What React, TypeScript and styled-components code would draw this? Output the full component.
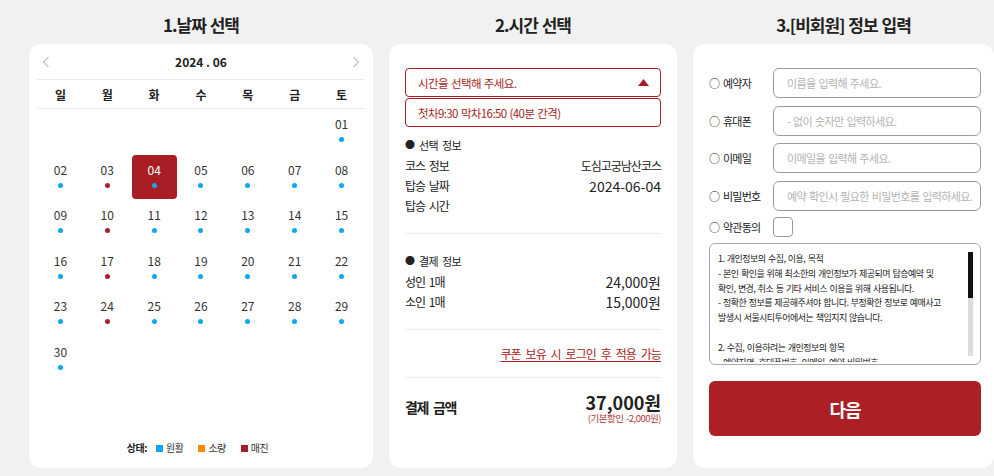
import React from 'react';
import styled, { createGlobalStyle } from 'styled-components';

const RED = '#a81e24';
const BLUE = '#0aa7f2';
const ORANGE = '#ff8a00';

const Global = createGlobalStyle`
  html, body { margin: 0; padding: 0; background: #f1f1f1; overflow: hidden; }
  body { font-family: "Noto Sans CJK KR", "Noto Sans", sans-serif; color: #222; word-spacing: 2px; }
  * { box-sizing: border-box; }
`;

const Page = styled.div`
  display: flex;
  gap: 16px;
  padding-left: 29px;
  width: 994px;
  height: 476px;
`;

const Column = styled.section<{ $w: number }>`
  width: ${p => p.$w}px;
  flex: none;
  display: flex;
  flex-direction: column;
`;

const Title = styled.h2`
  margin: 0;
  height: 44px;
  padding-top: 13px;
  font-size: 17px;
  line-height: 24px;
  font-weight: 700;
  text-align: center;
  letter-spacing: -1px;
  word-spacing: 1px;
  color: #222;
`;

const Card = styled.div<{ $pad: string }>`
  background: #fff;
  border-radius: 12px;
  height: 424px;
  display: flex;
  flex-direction: column;
  padding: ${p => p.$pad};
`;

/* ---------- calendar ---------- */
const CalHeader = styled.div`
  height: 36px;
  display: flex;
  align-items: center;
  justify-content: space-between;
  padding: 0 5px;
  border-bottom: 1px solid #ececec;
`;

const MonthLabel = styled.div`
  font-size: 12px;
  font-weight: 700;
  word-spacing: 0;
  color: #222;
`;

const ArrowBtn = styled.span`
  display: flex;
  width: 8px;
  height: 12px;
`;

const WeekRow = styled.div`
  display: grid;
  grid-template-columns: repeat(7, 1fr);
  height: 29px;
  align-items: center;
  border-bottom: 1px solid #ececec;
`;

const WeekDay = styled.div`
  text-align: center;
  font-size: 12px;
  font-weight: 700;
  color: #222;
`;

const DayGrid = styled.div`
  display: grid;
  grid-template-columns: repeat(7, 1fr);
  grid-auto-rows: 45.6px;
`;

const DayCell = styled.div<{ $selected?: boolean }>`
  display: flex;
  flex-direction: column;
  align-items: center;
  padding-top: 7px;
  margin: 0 1px 1px;
  border-radius: 4px;
  background: ${p => (p.$selected ? RED : 'transparent')};
`;

const DayNum = styled.span<{ $selected?: boolean }>`
  font-size: 12px;
  line-height: 16px;
  color: ${p => (p.$selected ? '#fff' : '#333')};
`;

const Dot = styled.span<{ $color: string }>`
  width: 5px;
  height: 5px;
  border-radius: 50%;
  margin-top: 5px;
  background: ${p => p.$color};
`;

const Legend = styled.div`
  margin-top: auto;
  padding-bottom: 13px;
  padding-left: 8px;
  display: flex;
  justify-content: center;
  align-items: center;
  font-size: 10px;
  line-height: 14px;
  letter-spacing: -0.5px;
  color: #333;
`;

const LegendLabel = styled.span`
  font-weight: 700;
  color: #222;
  margin-right: 9px;
`;

const LegendItem = styled.span`
  display: flex;
  align-items: center;
  gap: 3px;
  margin-right: 15px;
`;

const Swatch = styled.span<{ $color: string }>`
  width: 7px;
  height: 7px;
  background: ${p => p.$color};
`;

/* ---------- time ---------- */
const SelectBox = styled.div<{ $gap?: boolean }>`
  height: 29px;
  margin-top: ${p => (p.$gap ? '1px' : '0')};
  border: 1px solid ${RED};
  border-radius: 4px;
  display: flex;
  align-items: center;
  justify-content: space-between;
  padding: 0 11px 0 12px;
  color: ${RED};
  font-size: 11.5px;
  letter-spacing: -0.6px;
  word-spacing: 1px;
`;

const InfoSection = styled.div<{ $top: number }>`
  padding: ${p => p.$top}px 0 17px;
  border-bottom: 1px solid #ececec;
`;

const SectionTitle = styled.div`
  display: flex;
  align-items: center;
  gap: 4px;
  font-size: 11px;
  line-height: 16px;
  letter-spacing: -0.6px;
  color: #222;
`;

const Bullet = styled.span`
  font-size: 10px;
  letter-spacing: 0;
`;

const Rows = styled.div`
  margin-top: 3px;
`;

const Row = styled.div`
  display: flex;
  justify-content: space-between;
  height: 20px;
  line-height: 20px;
  font-size: 12px;
  letter-spacing: -1px;
  color: #222;
`;

const Value = styled.span<{ $num?: boolean }>`
  font-size: ${p => (p.$num ? '14px' : '12px')};
  letter-spacing: ${p => (p.$num ? '0' : '-1px')};
`;

const CouponRow = styled.div`
  height: 48px;
  display: flex;
  align-items: center;
  justify-content: flex-end;
  border-bottom: 1px solid #ececec;
`;

const CouponLink = styled.a`
  color: ${RED};
  font-size: 12px;
  letter-spacing: -0.9px;
  word-spacing: 3px;
  text-decoration: underline;
  text-underline-offset: 2px;
  cursor: pointer;
`;

const TotalRow = styled.div`
  display: flex;
  justify-content: space-between;
  align-items: flex-start;
  padding-top: 14px;
`;

const TotalLabel = styled.span`
  margin-top: 5px;
  font-size: 14px;
  line-height: 20px;
  font-weight: 700;
  letter-spacing: -1.3px;
  word-spacing: 3px;
  color: #222;
`;

const TotalRight = styled.div`
  display: flex;
  flex-direction: column;
  align-items: flex-end;
`;

const Amount = styled.span`
  font-size: 18px;
  line-height: 21px;
  font-weight: 700;
  color: #222;
`;

const Discount = styled.span`
  font-size: 9.5px;
  line-height: 11px;
  letter-spacing: -0.5px;
  word-spacing: 1px;
  color: #b23a3a;
`;

/* ---------- form ---------- */
const FormRow = styled.div`
  display: flex;
  align-items: center;
  height: 30px;
  margin-bottom: 7.5px;
`;

const FieldLabel = styled.label`
  width: 64px;
  flex: none;
  display: flex;
  align-items: center;
  gap: 3px;
  font-size: 11px;
  letter-spacing: -0.8px;
  color: #222;
`;

const Circle = styled.span`
  font-size: 11px;
  letter-spacing: 0;
`;

const TextInput = styled.input`
  flex: 1;
  min-width: 0;
  height: 30px;
  border: 1px solid #9a9a9a;
  border-radius: 6px;
  padding: 0 3px 0 13px;
  font-family: inherit;
  font-size: 11px;
  letter-spacing: -0.6px;
  word-spacing: 1px;
  color: #222;
  outline: none;
  background: #fff;
  &::placeholder { color: #b3b3b3; }
`;

const AgreeRow = styled.div`
  display: flex;
  align-items: center;
  height: 20px;
  margin-top: -1px;
`;

const CheckBox = styled.input`
  appearance: none;
  width: 20px;
  height: 20px;
  margin: 0;
  border: 1px solid #9a9a9a;
  border-radius: 4px;
  background: #fff;
`;

const TermsBox = styled.div`
  margin-top: 6px;
  height: 122px;
  border: 1px solid #a8a8a8;
  border-radius: 6px;
  padding: 8px 7px 2px 8px;
  display: flex;
  gap: 3px;
`;

const TermsText = styled.div`
  flex: 1;
  overflow: hidden;
  font-size: 9px;
  line-height: 14.8px;
  letter-spacing: -0.55px;
  word-spacing: 1px;
  color: #222;
  white-space: nowrap;
`;

const TermsLine = styled.div`
  min-height: 14.8px;
`;

const ScrollTrack = styled.div`
  width: 5px;
  height: 104px;
  flex: none;
  align-self: flex-start;
  background: #dcdcdc;
  display: flex;
  flex-direction: column;
`;

const ScrollThumb = styled.div`
  height: 46px;
  background: #111;
`;

const NextButton = styled.button`
  margin-top: 16px;
  height: 55px;
  border: none;
  border-radius: 6px;
  background: #ab1f25;
  color: #fff;
  font-family: inherit;
  font-size: 18px;
  font-weight: 700;
  letter-spacing: -1px;
  cursor: pointer;
`;

const Chevron = ({ dir }: { dir: 'l' | 'r' }) => (
  <svg width="8" height="12" viewBox="0 0 8 12">
    <polyline
      points={dir === 'l' ? '6.5,1 1.5,6 6.5,11' : '1.5,1 6.5,6 1.5,11'}
      fill="none"
      stroke="#c9c9c9"
      strokeWidth="1.4"
    />
  </svg>
);

const weekdays = ['일', '월', '화', '수', '목', '금', '토'];
const soldOut = [3, 10, 17, 24];

const terms = [
  '1. 개인정보의 수집, 이용, 목적',
  '- 본인 확인을 위해 최소한의 개인정보가 제공되며 탑승예약 및',
  '확인, 변경, 취소 등 기타 서비스 이용을 위해 사용됩니다.',
  '- 정확한 정보를 제공해주셔야 합니다. 부정확한 정보로 예매사고',
  '발생시 서울시티투어에서는 책임지지 않습니다.',
  '',
  '2. 수집, 이용하려는 개인정보의 항목',
  '- 예약자명, 휴대폰번호, 이메일, 예약 비밀번호',
];

export default function App() {
  const cells: (number | null)[] = [...Array(6).fill(null), ...Array.from({ length: 30 }, (_, i) => i + 1)];
  return (
    <>
      <Global />
      <Page>
        <Column $w={344}>
          <Title>1.날짜 선택</Title>
          <Card $pad="0 8px">
            <CalHeader>
              <ArrowBtn><Chevron dir="l" /></ArrowBtn>
              <MonthLabel>2024 . 06</MonthLabel>
              <ArrowBtn><Chevron dir="r" /></ArrowBtn>
            </CalHeader>
            <WeekRow>
              {weekdays.map(w => <WeekDay key={w}>{w}</WeekDay>)}
            </WeekRow>
            <DayGrid>
              {cells.map((d, i) =>
                d === null ? (
                  <div key={`e${i}`} />
                ) : (
                  <DayCell key={d} $selected={d === 4}>
                    <DayNum $selected={d === 4}>{String(d).padStart(2, '0')}</DayNum>
                    <Dot $color={soldOut.includes(d) ? RED : BLUE} />
                  </DayCell>
                )
              )}
            </DayGrid>
            <Legend>
              <LegendLabel>상태:</LegendLabel>
              <LegendItem><Swatch $color={BLUE} />원활</LegendItem>
              <LegendItem><Swatch $color={ORANGE} />소량</LegendItem>
              <LegendItem><Swatch $color={RED} />매진</LegendItem>
            </Legend>
          </Card>
        </Column>

        <Column $w={288}>
          <Title>2.시간 선택</Title>
          <Card $pad="24px 16px 0">
            <SelectBox>
              <span>시간을 선택해 주세요.</span>
              <svg width="11" height="7" viewBox="0 0 11 7"><polygon points="5.5,0 11,7 0,7" fill={RED} /></svg>
            </SelectBox>
            <SelectBox $gap>
              <span>첫차9:30 막차16:50 (40분 간격)</span>
            </SelectBox>
            <InfoSection $top={10}>
              <SectionTitle><Bullet>●</Bullet>선택 정보</SectionTitle>
              <Rows>
                <Row><span>코스 정보</span><Value>도심고궁남산코스</Value></Row>
                <Row><span>탑승 날짜</span><Value $num>2024-06-04</Value></Row>
                <Row><span>탑승 시간</span><Value $num></Value></Row>
              </Rows>
            </InfoSection>
            <InfoSection $top={19}>
              <SectionTitle><Bullet>●</Bullet>결제 정보</SectionTitle>
              <Rows>
                <Row><span>성인 1매</span><Value $num>24,000원</Value></Row>
                <Row><span>소인 1매</span><Value $num>15,000원</Value></Row>
              </Rows>
            </InfoSection>
            <CouponRow>
              <CouponLink>쿠폰 보유 시 로그인 후 적용 가능</CouponLink>
            </CouponRow>
            <TotalRow>
              <TotalLabel>결제 금액</TotalLabel>
              <TotalRight>
                <Amount>37,000원</Amount>
                <Discount>(기본할인 -2,000원)</Discount>
              </TotalRight>
            </TotalRow>
          </Card>
        </Column>

        <Column $w={301}>
          <Title>3.[비회원] 정보 입력</Title>
          <Card $pad="24px 13px 0 16px">
            <FormRow>
              <FieldLabel><Circle>○</Circle>예약자</FieldLabel>
              <TextInput placeholder="이름을 입력해 주세요." />
            </FormRow>
            <FormRow>
              <FieldLabel><Circle>○</Circle>휴대폰</FieldLabel>
              <TextInput placeholder="- 없이 숫자만 입력하세요." />
            </FormRow>
            <FormRow>
              <FieldLabel><Circle>○</Circle>이메일</FieldLabel>
              <TextInput placeholder="이메일을 입력해 주세요." />
            </FormRow>
            <FormRow>
              <FieldLabel><Circle>○</Circle>비밀번호</FieldLabel>
              <TextInput type="password" placeholder="예약 확인시 필요한 비밀번호를 입력하세요." />
            </FormRow>
            <AgreeRow>
              <FieldLabel><Circle>○</Circle>약관동의</FieldLabel>
              <CheckBox type="checkbox" />
            </AgreeRow>
            <TermsBox>
              <TermsText>
                {terms.map((t, i) => <TermsLine key={i}>{t}</TermsLine>)}
              </TermsText>
              <ScrollTrack><ScrollThumb /></ScrollTrack>
            </TermsBox>
            <NextButton>다음</NextButton>
          </Card>
        </Column>
      </Page>
    </>
  );
}
